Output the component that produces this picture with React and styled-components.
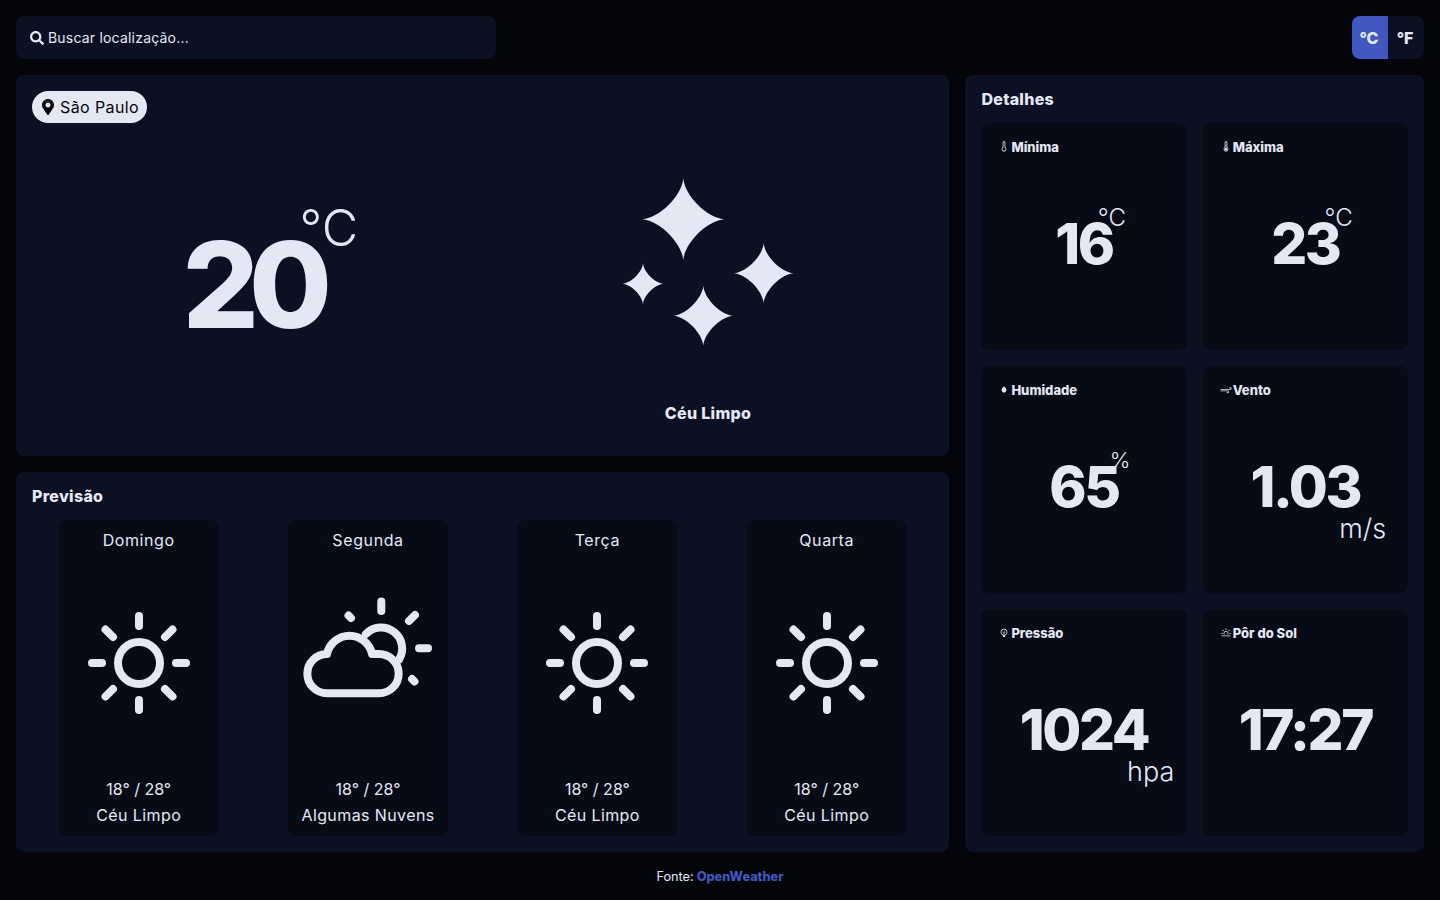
import React from "react";
import styled, { createGlobalStyle } from "styled-components";
import { FaSearch, FaMapMarkerAlt } from "react-icons/fa";
import { WiThermometerExterior, WiThermometer, WiRaindrop, WiStrongWind, WiBarometer, WiHorizonAlt } from "react-icons/wi";

const ink = "#e4e8f5";
const pageBg = "#03050b";
const panelBg = "#0c1023";
const cardBg = "#070b16";
const accent = "#4058bf";

const Global = createGlobalStyle`
  * { box-sizing: border-box; }
  html, body { margin: 0; height: 100%; background: ${pageBg}; }
  body { font-family: "Inter", "Noto Sans", sans-serif; color: ${ink}; }
`;

const Page = styled.div`
  height: 900px;
  padding: 16px 16px 0;
  display: flex;
  flex-direction: column;
`;

const TopBar = styled.header`
  height: 43px;
  flex: none;
  margin-bottom: 16px;
  display: flex;
  justify-content: space-between;
`;

const Search = styled.label`
  width: 480px;
  display: flex;
  align-items: center;
  gap: 4px;
  padding-left: 14px;
  background: ${panelBg};
  border-radius: 8px;
  font-size: 14px;
`;

const SearchInput = styled.input`
  flex: 1;
  border: 0;
  outline: 0;
  padding: 0;
  background: transparent;
  color: ${ink};
  font: 400 14px "Inter", sans-serif;
  letter-spacing: 0.2px;
  &::placeholder { color: ${ink}; opacity: 1; }
`;

const Units = styled.div`
  display: flex;
  border-radius: 8px;
  overflow: hidden;
`;

const UnitButton = styled.button`
  width: 36px;
  border: 0;
  padding: 0 2px 0 0;
  background: ${(p) => (p.$active ? accent : panelBg)};
  color: ${ink};
  font: 800 16px "Inter", sans-serif;
`;

const Main = styled.main`
  flex: none;
  height: 777px;
  display: grid;
  grid-template-columns: 933.4px 458.6px;
  column-gap: 16px;
`;

const LeftColumn = styled.div`
  display: grid;
  grid-template-rows: 1fr 1fr;
  row-gap: 16px;
  min-height: 0;
`;

const Panel = styled.section`
  background: ${panelBg};
  border-radius: 8px;
  padding: 16px;
  min-height: 0;
  display: flex;
  flex-direction: column;
`;

const PanelTitle = styled.h2`
  margin: 0 0 16px;
  font-size: 16px;
  line-height: 16px;
  font-weight: 800;
  letter-spacing: 0.3px;
`;

const Pill = styled.div`
  align-self: flex-start;
  width: 115px;
  height: 32px;
  display: flex;
  align-items: center;
  gap: 4px;
  padding-left: 8px;
  border-radius: 16px;
  background: ${ink};
  color: ${pageBg};
  font-size: 16px;
  letter-spacing: 0.4px;
  white-space: nowrap;
`;

const NowRow = styled.div`
  flex: 1;
  display: grid;
  grid-template-columns: 1fr 1fr;
`;

const TempSide = styled.div`
  display: flex;
  align-items: center;
  justify-content: center;
  padding-top: 8px;
`;

const BigTemp = styled.div`
  position: relative;
  font-size: 120px;
  line-height: 1;
  font-weight: 800;
  letter-spacing: -10px;
  margin-right: 10px;
`;

const BigUnit = styled.span`
  position: absolute;
  left: 117px;
  top: -27px;
  font-size: 50px;
  line-height: 1.2;
  font-weight: 300;
  letter-spacing: 0;
`;

const SkySide = styled.div`
  display: flex;
  flex-direction: column;
  align-items: center;
  padding-top: 46px;
`;

const SkyIcon = styled.svg`
  display: block;
  width: 180px;
  height: 180px;
  fill: ${ink};
  margin-bottom: 52px;
`;

const SkyLabel = styled.div`
  font-size: 16px;
  line-height: 24px;
  font-weight: 800;
  letter-spacing: 0.3px;
`;

const ForecastGrid = styled.div`
  flex: 1;
  min-height: 0;
  display: grid;
  grid-template-columns: repeat(4, 1fr);
  column-gap: 16px;
  justify-items: center;
`;

const DayCard = styled.article`
  width: 160px;
  display: flex;
  flex-direction: column;
  align-items: center;
  padding: 8px 0;
  border-radius: 8px;
  background: ${cardBg};
  font-size: 16px;
  line-height: 26px;
  white-space: nowrap;
`;

const DayName = styled.div`
  line-height: 24px;
  letter-spacing: 0.6px;
`;

const DayIconBox = styled.div`
  flex: 1;
  display: flex;
  align-items: center;
  justify-content: center;
`;

const DayIcon = styled.svg`
  display: block;
  width: 160px;
  height: 160px;
  overflow: visible;
  fill: none;
  stroke: ${ink};
  stroke-width: 8;
  stroke-linecap: round;
  stroke-linejoin: round;
`;

const DaySky = styled.div`
  letter-spacing: 0.4px;
`;

const DetailGrid = styled.div`
  flex: 1;
  display: grid;
  grid-template-columns: 1fr 1fr;
  grid-template-rows: repeat(3, 227px);
  gap: 16px;
`;

const DetailCard = styled.article`
  display: flex;
  flex-direction: column;
  background: ${cardBg};
  border-radius: 8px;
  padding: 16px 16px 17px;
`;

const DetailLabel = styled.div`
  display: flex;
  align-items: center;
  height: 16px;
  font-size: 13px;
  font-weight: 800;
  white-space: nowrap;
  svg { flex: none; width: 14px; height: 14px; }
`;

const DetailBody = styled.div`
  flex: 1;
  display: flex;
  align-items: center;
  justify-content: center;
`;

const DetailValue = styled.div`
  position: relative;
  font-size: 56.5px;
  line-height: 1;
  font-weight: 800;
  letter-spacing: -2.4px;
`;

const DetailUnit = styled.span`
  position: absolute;
  font-weight: 300;
  line-height: 1;
  letter-spacing: 0;
  ${(p) =>
    p.$below
      ? "font-size: 27px; right: -26px; top: 56px;"
      : `font-size: ${p.$narrow ? 22 : 24}px; left: calc(100% - ${p.$narrow ? 9 : 15}px); top: -10px;`}
`;

const Footer = styled.footer`
  flex: 1;
  display: flex;
  align-items: center;
  justify-content: center;
  gap: 3px;
  font-size: 12.7px;
`;

const Source = styled.a`
  color: ${accent};
  font-weight: 800;
`;

const star = (cx, cy, r) => {
  const a = 0.03 * r;
  const b = 0.58 * r;
  return `M${cx} ${cy - r}C${cx + a} ${cy - b} ${cx + b} ${cy - a} ${cx + r} ${cy}C${cx + b} ${cy + a} ${cx + a} ${cy + b} ${cx} ${cy + r}C${cx - a} ${cy + b} ${cx - b} ${cy + a} ${cx - r} ${cy}C${cx - b} ${cy - a} ${cx - a} ${cy - b} ${cx} ${cy - r}Z`;
};

const Stars = () => (
  <SkyIcon viewBox="0 0 180 180" aria-hidden="true">
    <path d={star(65.3, 50.3, 41)} />
    <path d={star(145.7, 104.3, 30)} />
    <path d={star(25, 114.7, 20.5)} />
    <path d={star(85.3, 146.7, 30)} />
  </SkyIcon>
);

const Sun = () => (
  <DayIcon viewBox="0 0 160 160" aria-hidden="true">
    <circle cx="80" cy="79" r="21" />
    <path d="M80 32V42M80 116V126M33 79H43M117 79H127M46.5 45.5L54 53M106 105L113.5 112.5M46.5 112.5L54 105M106 53L113.5 45.5" />
  </DayIcon>
);

const CloudSun = () => (
  <DayIcon viewBox="0 0 160 160" aria-hidden="true">
    <g transform="translate(-3 6)">
      <path d="M42 103.3H94A19.6 19.6 0 0 0 94 64H87A23 23 0 0 0 42 64A19.6 19.6 0 0 0 42 103.3Z" />
      <path d="M80.9 44.1A21 21 0 0 1 114 69.6" />
      <path d="M96.3 11.5V21M134 58.3H143M124 31L130 25M63.5 25.5L66 28M127 89L129.5 91.5" />
    </g>
  </DayIcon>
);

const days = [
  { name: "Domingo", sky: "Céu Limpo", Icon: Sun },
  { name: "Segunda", sky: "Algumas Nuvens", Icon: CloudSun },
  { name: "Terça", sky: "Céu Limpo", Icon: Sun },
  { name: "Quarta", sky: "Céu Limpo", Icon: Sun },
];

const details = [
  { label: "Mínima", Icon: WiThermometerExterior, value: "16", unit: "°C" },
  { label: "Máxima", Icon: WiThermometer, value: "23", unit: "°C" },
  { label: "Humidade", Icon: WiRaindrop, value: "65", unit: "%", narrow: true },
  { label: "Vento", Icon: WiStrongWind, value: "1.03", unit: "m/s", below: true },
  { label: "Pressão", Icon: WiBarometer, value: "1024", unit: "hpa", below: true },
  { label: "Pôr do Sol", Icon: WiHorizonAlt, value: "17:27" },
];

export default function App() {
  return (
    <>
      <Global />
      <Page>
        <TopBar>
          <Search>
            <FaSearch size={14} />
            <SearchInput placeholder="Buscar localização..." />
          </Search>
          <Units>
            <UnitButton $active>°C</UnitButton>
            <UnitButton>°F</UnitButton>
          </Units>
        </TopBar>
        <Main>
          <LeftColumn>
            <Panel>
              <Pill>
                <FaMapMarkerAlt size={16} />
                São Paulo
              </Pill>
              <NowRow>
                <TempSide>
                  <BigTemp>
                    20
                    <BigUnit>°C</BigUnit>
                  </BigTemp>
                </TempSide>
                <SkySide>
                  <Stars />
                  <SkyLabel>Céu Limpo</SkyLabel>
                </SkySide>
              </NowRow>
            </Panel>
            <Panel>
              <PanelTitle>Previsão</PanelTitle>
              <ForecastGrid>
                {days.map(({ name, sky, Icon }) => (
                  <DayCard key={name}>
                    <DayName>{name}</DayName>
                    <DayIconBox>
                      <Icon />
                    </DayIconBox>
                    <div>18° / 28°</div>
                    <DaySky>{sky}</DaySky>
                  </DayCard>
                ))}
              </ForecastGrid>
            </Panel>
          </LeftColumn>
          <Panel>
            <PanelTitle>Detalhes</PanelTitle>
            <DetailGrid>
              {details.map(({ label, Icon, value, unit, below, narrow }) => (
                <DetailCard key={label}>
                  <DetailLabel>
                    <Icon />
                    {label}
                  </DetailLabel>
                  <DetailBody>
                    <DetailValue>
                      {value}
                      {unit && (
                        <DetailUnit $below={below} $narrow={narrow}>
                          {unit}
                        </DetailUnit>
                      )}
                    </DetailValue>
                  </DetailBody>
                </DetailCard>
              ))}
            </DetailGrid>
          </Panel>
        </Main>
        <Footer>
          Fonte: <Source>OpenWeather</Source>
        </Footer>
      </Page>
    </>
  );
}
